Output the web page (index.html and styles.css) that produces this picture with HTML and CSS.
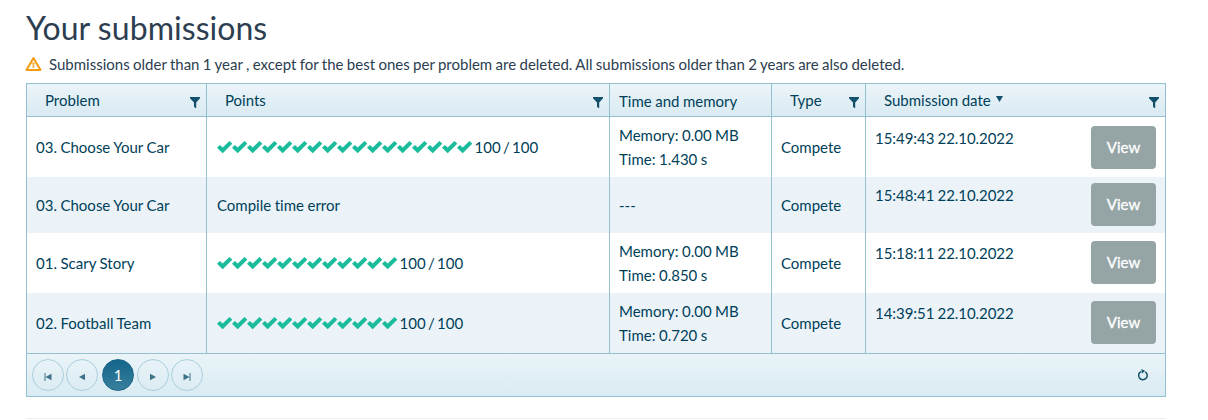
FILE: index.html
```
<!DOCTYPE html>
<html lang="en">
<head>
<meta charset="utf-8">
<title>Your submissions</title>
<link rel="stylesheet" href="styles.css">
</head>
<body>
<svg class="defs" width="0" height="0">
  <symbol id="filter" viewBox="0 0 10 11"><path d="M0 0H10V1.2L6.2 5.6V11H5.4L4 9.8V5.6L0 1.2Z"/></symbol>
  <symbol id="check" viewBox="0 0 15 12"><path d="M0 6.800L2.900 4L5.700 6.600L12.400 0L15.300 2.600L5.700 12.300Z"/></symbol>
</svg>
<main class="page">
  <h1 class="title">Your submissions</h1>
  <p class="notice">
    <svg class="warning" viewBox="0 0 18 16"><path class="warning-edge" d="M9.500 2L16.500 14H2.500Z"/><path class="warning-mark" d="M7.500 6.500h3.500v1.500h-.7v4H8.500V8h-1Z"/></svg>
    <span>Submissions older than 1 year , except for the best ones per problem are deleted. All submissions older than 2 years are also deleted.</span>
  </p>
  <section class="grid">
    <div class="row head">
      <div class="cell"><span>Problem</span><svg class="filter"><use href="#filter"/></svg></div>
      <div class="cell"><span>Points</span><svg class="filter"><use href="#filter"/></svg></div>
      <div class="cell plain"><span>Time and memory</span></div>
      <div class="cell"><span>Type</span><svg class="filter"><use href="#filter"/></svg></div>
      <div class="cell"><span>Submission date</span><svg class="sort" viewBox="0 0 7 6"><path d="M0 0H7L3.500 6Z"/></svg><svg class="filter"><use href="#filter"/></svg></div>
    </div>
    <div class="row">
      <div class="cell">03. Choose Your Car</div>
      <div class="cell points"><span class="checks" data-count="17"></span><span class="score">100 / 100</span></div>
      <div class="cell"><div>Memory: 0.00 MB<br>Time: 1.430 s</div></div>
      <div class="cell">Compete</div>
      <div class="cell date"><span>15:49:43 22.10.2022</span><button class="view">View</button></div>
    </div>
    <div class="row alt short">
      <div class="cell">03. Choose Your Car</div>
      <div class="cell points">Compile time error</div>
      <div class="cell">---</div>
      <div class="cell">Compete</div>
      <div class="cell date"><span>15:48:41 22.10.2022</span><button class="view">View</button></div>
    </div>
    <div class="row raised">
      <div class="cell">01. Scary Story</div>
      <div class="cell points"><span class="checks" data-count="12"></span><span class="score">100 / 100</span></div>
      <div class="cell"><div>Memory: 0.00 MB<br>Time: 0.850 s</div></div>
      <div class="cell">Compete</div>
      <div class="cell date"><span>15:18:11 22.10.2022</span><button class="view">View</button></div>
    </div>
    <div class="row alt raised">
      <div class="cell">02. Football Team</div>
      <div class="cell points"><span class="checks" data-count="12"></span><span class="score">100 / 100</span></div>
      <div class="cell"><div>Memory: 0.00 MB<br>Time: 0.720 s</div></div>
      <div class="cell">Compete</div>
      <div class="cell date"><span>14:39:51 22.10.2022</span><button class="view">View</button></div>
    </div>
    <div class="pager">
      <span class="page-link"><svg class="arrow" viewBox="0 0 8 8"><path d="M0.500 0H1.500V8H0.500Z M7.500 .8V7.200L1.500 4Z"/></svg></span>
      <span class="page-link"><svg class="arrow" viewBox="0 0 8 8"><path d="M7 .8V7.200L1 4Z"/></svg></span>
      <span class="page-link current">1</span>
      <span class="page-link"><svg class="arrow" viewBox="0 0 8 8"><path d="M1 .8V7.200L7 4Z"/></svg></span>
      <span class="page-link"><svg class="arrow" viewBox="0 0 8 8"><path d="M6.500 0H7.500V8H6.500Z M.5 .8V7.200L6.500 4Z"/></svg></span>
      <svg class="refresh" viewBox="0 0 12 12"><path class="refresh-ring" d="M8.200 2.800A4.300 4.300 0 1 1 4 2.600"/><path class="refresh-tip" d="M4.400 0L8.200 2L4.800 4.500Z"/></svg>
    </div>
  </section>
  <hr class="rule">
</main>
<script src="checks.js"></script>
</body>
</html>
```
FILE: styles.css
```
* { box-sizing: border-box; }
body {
  margin: 0;
  height: 420px;
  overflow: hidden;
  background: #fff;
  color: #2c3e50;
  font: 15px/24px Lato, sans-serif;
  font-variant-ligatures: none;
}
.defs { display: block; }
.page { width: 1140px; margin-left: 26px; padding-top: 10px; }
.title { margin: 0; font-size: 32px; line-height: 35px; font-weight: 400; letter-spacing: 0.05px; }
.notice {
  display: flex;
  align-items: center;
  gap: 7px;
  height: 24px;
  margin: 7px 0 7px -2px;
  white-space: nowrap;
  word-spacing: -0.46px;
}
.warning { width: 18px; height: 16px; margin-top: -1px; }
.warning-edge { fill: none; stroke: #f39c12; stroke-width: 2; stroke-linejoin: round; }
.warning-mark { fill: #f39c12; opacity: .75; }
.grid {
  border: solid #94c0d2;
  border-width: 1px 1px 1px 0;
  color: #003f59;
}
.row {
  display: grid;
  grid-template-columns: 180px 403px 162px 94px 300px;
  height: 60px;
  word-spacing: -0.3px;
}
.short { height: 56px; }
.alt { background: #ebf3f9; }
.cell {
  display: flex;
  align-items: center;
  border-left: 1px solid #94c0d2;
  padding: 0 9px 1px;
  white-space: nowrap;
}
.points { padding-left: 10px; }
.head {
  height: 33px;
  border-bottom: 1px solid #94c0d2;
  background: linear-gradient(#ebf4f9, #d9eaf2);
}
.head .cell { padding: 0 6px 1px 18px; }
.head .plain { padding: 2px 0 0 9px; }
.filter { width: 10px; height: 11px; margin: 5px 0 0 auto; fill: #13506b; }
.sort { width: 7px; height: 6px; margin: -2px 0 0 5px; fill: #13506b; }
.checks { display: flex; margin-right: 2.500px; }
.check { width: 15px; height: 12px; fill: #1abc9c; overflow: visible; }
.score { word-spacing: -1.5px; }
.date {
  align-items: flex-start;
  justify-content: space-between;
  padding: 9px 9px 0;
  letter-spacing: -0.05px;
  word-spacing: -0.6px;
}
.short .date { padding-top: 6px; }
.raised .date { padding-top: 8px; }
.view {
  width: 65px;
  height: 43px;
  border: 0;
  border-radius: 4px;
  background: #95a5a6;
  color: #fff;
  font: 15px/21px Lato, sans-serif;
  -webkit-text-stroke: 0.3px #fff;
}
.pager {
  display: flex;
  align-items: center;
  gap: 2px;
  height: 43px;
  padding: 0 16px 0 5px;
  border: solid #94c0d2;
  border-width: 1px 0 0 1px;
  background: linear-gradient(#eaf4f8, #d9ebf2);
}
.page-link {
  display: flex;
  align-items: center;
  justify-content: center;
  width: 32px;
  height: 32px;
  border: 1px solid #a9cfdd;
  border-radius: 50%;
}
.current {
  margin: 0 1px 0 2px;
  border-color: #1a6789;
  background: linear-gradient(#12658a, #3a7f9d);
  color: #fff;
}
.arrow { width: 8px; height: 8px; margin-top: 4px; fill: #3d7389; }
.refresh { width: 12px; height: 12px; margin-left: auto; }
.refresh-ring { fill: none; stroke: #13506b; stroke-width: 1.5; }
.refresh-tip { fill: #13506b; }
.rule { margin: 21px 0 0; border: 0; border-top: 1px solid #ecf0f1; }
```
FILE: checks.js
```
// One tick per passed test.
document.querySelectorAll('.checks').forEach(function (box) {
  box.innerHTML = '<svg class="check"><use href="#check"/></svg>'.repeat(Number(box.dataset.count));
});
```
